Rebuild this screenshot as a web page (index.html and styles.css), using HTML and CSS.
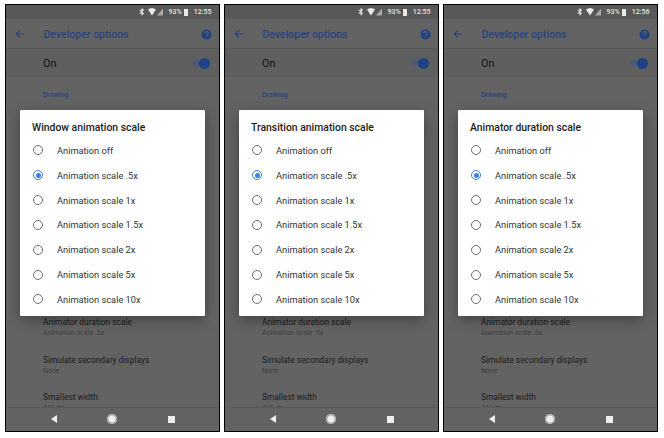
FILE: index.html
```html
<!DOCTYPE html>
<html lang="en">
<head>
<meta charset="utf-8">
<title>Developer options</title>
<link rel="stylesheet" href="styles.css">
</head>
<body>
<main class="strip">

<section class="phone">
  <div class="status"><svg class="st-icons" width="25" height="10" viewBox="0 0 25 10"><path class="ico" d="M2.500.8 5 3 3.400 4.800 5 6.600 2.500 8.800V5.600L1 7 .4 6.300 2.100 4.800 .4 3.300 1 2.600 2.500 4Z"/><path class="ico" d="M9 2.500Q13-.5 17 2.500L13 8.500Z"/><path class="ico-dim" d="M24 1.500V8.500H18Z"/></svg><span class="pct">93%</span><span class="batt"></span><span class="time">12:55</span></div>
  <header class="appbar"><svg class="back" width="10" height="10" viewBox="0 0 10 10"><path d="M9 5H1.500M4.800 1.500 1.300 5 4.800 8.500"/></svg><h1>Developer options</h1><svg class="help" width="11" height="11" viewBox="0 0 11 11"><circle cx="5.500" cy="5.500" r="5"/><path d="M3.800 4.300C3.900 2.200 7.200 2.200 7.200 4.200 7.200 5.400 5.500 5.400 5.500 6.800"/><circle class="dot" cx="5.500" cy="8.300" r=".7"/></svg></header>
  <div class="onrow"><span>On</span><span class="switch"><i></i></span></div>
  <div class="list">
    <div class="section">Drawing</div>
    <div class="gap"></div>
    <div class="item"><div class="t">Animator duration scale</div><div class="s">Animation scale .5x</div></div>
    <div class="item"><div class="t">Simulate secondary displays</div><div class="s">None</div></div>
    <div class="item"><div class="t">Smallest width</div><div class="s">411 dp</div></div>
  </div>
  <nav class="navbar"><span class="nb"></span><span class="nh"></span><span class="nr"></span></nav>
  <div class="dialog">
    <h2>Window animation scale</h2>
    <div class="opt"><span class="radio"></span>Animation off</div>
    <div class="opt"><span class="radio on"></span>Animation scale .5x</div>
    <div class="opt"><span class="radio"></span>Animation scale 1x</div>
    <div class="opt"><span class="radio"></span>Animation scale 1.5x</div>
    <div class="opt"><span class="radio"></span>Animation scale 2x</div>
    <div class="opt"><span class="radio"></span>Animation scale 5x</div>
    <div class="opt"><span class="radio"></span>Animation scale 10x</div>
  </div>
</section>

<section class="phone">
  <div class="status"><svg class="st-icons" width="25" height="10" viewBox="0 0 25 10"><path class="ico" d="M2.500.8 5 3 3.400 4.800 5 6.600 2.500 8.800V5.600L1 7 .4 6.300 2.100 4.800 .4 3.300 1 2.600 2.500 4Z"/><path class="ico" d="M9 2.500Q13-.5 17 2.500L13 8.500Z"/><path class="ico-dim" d="M24 1.500V8.500H18Z"/></svg><span class="pct">93%</span><span class="batt"></span><span class="time">12:55</span></div>
  <header class="appbar"><svg class="back" width="10" height="10" viewBox="0 0 10 10"><path d="M9 5H1.500M4.800 1.500 1.300 5 4.800 8.500"/></svg><h1>Developer options</h1><svg class="help" width="11" height="11" viewBox="0 0 11 11"><circle cx="5.500" cy="5.500" r="5"/><path d="M3.800 4.300C3.900 2.200 7.200 2.200 7.200 4.200 7.200 5.400 5.500 5.400 5.500 6.800"/><circle class="dot" cx="5.500" cy="8.300" r=".7"/></svg></header>
  <div class="onrow"><span>On</span><span class="switch"><i></i></span></div>
  <div class="list">
    <div class="section">Drawing</div>
    <div class="gap"></div>
    <div class="item"><div class="t">Animator duration scale</div><div class="s">Animation scale .5x</div></div>
    <div class="item"><div class="t">Simulate secondary displays</div><div class="s">None</div></div>
    <div class="item"><div class="t">Smallest width</div><div class="s">411 dp</div></div>
  </div>
  <nav class="navbar"><span class="nb"></span><span class="nh"></span><span class="nr"></span></nav>
  <div class="dialog">
    <h2>Transition animation scale</h2>
    <div class="opt"><span class="radio"></span>Animation off</div>
    <div class="opt"><span class="radio on"></span>Animation scale .5x</div>
    <div class="opt"><span class="radio"></span>Animation scale 1x</div>
    <div class="opt"><span class="radio"></span>Animation scale 1.5x</div>
    <div class="opt"><span class="radio"></span>Animation scale 2x</div>
    <div class="opt"><span class="radio"></span>Animation scale 5x</div>
    <div class="opt"><span class="radio"></span>Animation scale 10x</div>
  </div>
</section>

<section class="phone">
  <div class="status"><svg class="st-icons" width="25" height="10" viewBox="0 0 25 10"><path class="ico" d="M2.500.8 5 3 3.400 4.800 5 6.600 2.500 8.800V5.600L1 7 .4 6.300 2.100 4.800 .4 3.300 1 2.600 2.500 4Z"/><path class="ico" d="M9 2.500Q13-.5 17 2.500L13 8.500Z"/><path class="ico-dim" d="M24 1.500V8.500H18Z"/></svg><span class="pct">93%</span><span class="batt"></span><span class="time">12:56</span></div>
  <header class="appbar"><svg class="back" width="10" height="10" viewBox="0 0 10 10"><path d="M9 5H1.500M4.800 1.500 1.300 5 4.800 8.500"/></svg><h1>Developer options</h1><svg class="help" width="11" height="11" viewBox="0 0 11 11"><circle cx="5.500" cy="5.500" r="5"/><path d="M3.800 4.300C3.900 2.200 7.200 2.200 7.200 4.200 7.200 5.400 5.500 5.400 5.500 6.800"/><circle class="dot" cx="5.500" cy="8.300" r=".7"/></svg></header>
  <div class="onrow"><span>On</span><span class="switch"><i></i></span></div>
  <div class="list">
    <div class="section">Drawing</div>
    <div class="gap"></div>
    <div class="item"><div class="t">Animator duration scale</div><div class="s">Animation scale .5x</div></div>
    <div class="item"><div class="t">Simulate secondary displays</div><div class="s">None</div></div>
    <div class="item"><div class="t">Smallest width</div><div class="s">411 dp</div></div>
  </div>
  <nav class="navbar"><span class="nb"></span><span class="nh"></span><span class="nr"></span></nav>
  <div class="dialog">
    <h2>Animator duration scale</h2>
    <div class="opt"><span class="radio"></span>Animation off</div>
    <div class="opt"><span class="radio on"></span>Animation scale .5x</div>
    <div class="opt"><span class="radio"></span>Animation scale 1x</div>
    <div class="opt"><span class="radio"></span>Animation scale 1.5x</div>
    <div class="opt"><span class="radio"></span>Animation scale 2x</div>
    <div class="opt"><span class="radio"></span>Animation scale 5x</div>
    <div class="opt"><span class="radio"></span>Animation scale 10x</div>
  </div>
</section>

</main>
</body>
</html>
```
FILE: styles.css
```css
* { box-sizing: border-box; }
html, body { margin: 0; background: #fff; }
body { font-family: Roboto, "Liberation Sans", sans-serif; }
.strip { display: flex; gap: 4px; padding: 4px 5px 0; width: 664px; height: 438px; }
.phone {
  position: relative; width: 215px; height: 428px; flex: none;
  border: 1.500px solid #000; background: #636363;
  display: flex; flex-direction: column; overflow: hidden;
}
.status {
  height: 14px; flex: none; background: #585858; color: #e4e4e4;
  display: flex; align-items: center; justify-content: flex-end;
  padding-right: 7.500px; font-size: 7px; font-weight: 500;
}
.ico { fill: #e8e8e8; }
.ico-dim { fill: #aaa; }
.pct { margin-left: 5px; }
.batt { width: 4px; height: 7px; margin: 0 5.500px 0 2.500px; background: #e8e8e8; }
.appbar {
  height: 29.500px; flex: none; background: #636363; border-bottom: 1px solid #575757;
  display: flex; align-items: center; padding: 2px 7px 0 9px;
}
.appbar h1 { margin: 0 0 0 18.500px; flex: 1; font-size: 10.500px; font-weight: 500; color: #28447f; }
.back path { fill: none; stroke: #28447f; stroke-width: 1.200; }
.help circle { fill: #1f4286; }
.help path { fill: none; stroke: #636363; stroke-width: 1.200; }
.help .dot { fill: #636363; }
.onrow {
  height: 28px; flex: none; background: #5f5f5f;
  display: flex; align-items: center; justify-content: space-between;
  padding: 1px 9.500px 0 37px; font-size: 10.800px; color: #111;
}
.switch { position: relative; width: 17px; height: 6px; border-radius: 3px; background: #4b5a78; }
.switch i { position: absolute; right: 0; top: -2.500px; width: 11px; height: 11px; border-radius: 50%; background: #1f4286; }
.list { flex: 1; min-height: 0; padding-left: 37px; overflow: hidden; }
.section { font-size: 7px; font-weight: 500; color: #28447f; padding-top: 14.500px; }
.gap { height: 218px; }
.item { height: 37.500px; }
.t { font-size: 8.400px; color: #1c1c1c; line-height: 11px; }
.s { font-size: 7px; color: #3f3f3f; line-height: 10px; }
.navbar {
  height: 24.500px; flex: none; background: #636363; border-top: 1px solid #5a5a5a;
  display: flex; align-items: center; justify-content: space-between; padding: 0 44px 0 44.500px;
}
.nb { width: 0; height: 0; border-right: 6px solid #eee; border-top: 4px solid transparent; border-bottom: 4px solid transparent; }
.nh { width: 10px; height: 10px; border-radius: 50%; background: #eee; box-shadow: inset 0 0 0 1.500px #aaa; }
.nr { width: 7px; height: 7px; background: #eee; }
.dialog {
  position: absolute; left: 13.500px; top: 104.500px; width: 185.500px; height: 206px;
  background: #fff; border-radius: 1px; box-shadow: 0 4px 14px rgba(0,0,0,.35);
  padding: 11px 0 0 12.500px; color: #2b2b2b;
}
.dialog h2 { margin: 0 0 3.500px; font-size: 10.400px; line-height: 14px; font-weight: 500; color: #1c1c1c; }
.opt { display: flex; align-items: center; height: 24.850px; font-size: 9.250px; color: #333; }
.radio { width: 10px; height: 10px; border-radius: 50%; border: 1px solid #6e6e6e; margin: 0 14px 0 1px; flex: none; position: relative; }
.radio.on { border-color: #3d7fe8; }
.radio.on::after { content: ""; position: absolute; inset: 1.500px; border-radius: 50%; background: #3d7fe8; }
```
